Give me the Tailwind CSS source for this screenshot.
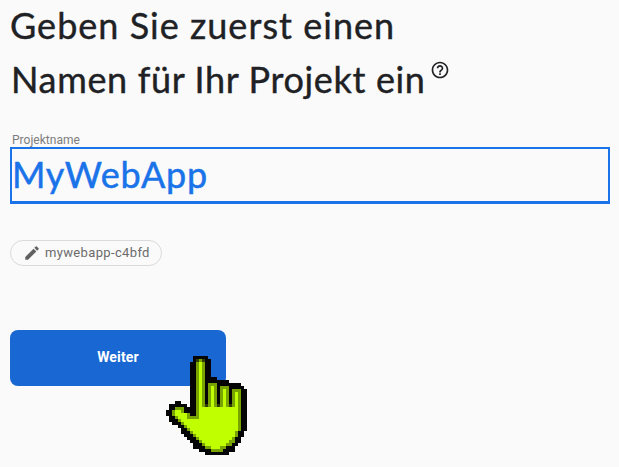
<!DOCTYPE html>
<html lang="de">
<head>
<meta charset="utf-8">
<title>Projekt erstellen</title>
<script src="https://cdn.jsdelivr.net/npm/@tailwindcss/browser@4"></script>
</head>
<body class="relative h-[467px] w-[619px] overflow-hidden bg-[#fafafa] font-[Roboto,sans-serif]">
<main class="flex flex-col items-start px-[10px]">
  <h1 class="h-[107px] whitespace-nowrap font-[Lato,sans-serif] text-[36px] text-[#202124] [-webkit-text-stroke:0.4px_#202124]">
    <span class="block h-[54px] leading-[50px] tracking-[1.02px]">Geben Sie zuerst einen</span>
    <span class="flex h-[54px] items-start leading-[50px]"><span class="w-[420px] pl-px tracking-[0.65px]">Namen für Ihr Projekt ein</span>
      <svg class="mt-[6px] size-5" viewBox="0 0 24 24" fill="#202124"><path d="M11 18h2v-2h-2v2zm1-16C6.48 2 2 6.48 2 12s4.480 10 10 10 10-4.480 10-10S17.520 2 12 2zm0 18c-4.410 0-8-3.590-8-8s3.590-8 8-8 8 3.590 8 8-3.590 8-8 8zm0-14c-2.210 0-4 1.790-4 4h2c0-1.100.9-2 2-2s2 .9 2 2c0 2-3 1.750-3 5h2c0-2.250 3-2.500 3-5 0-2.210-1.790-4-4-4z"/></svg>
    </span>
  </h1>
  <label class="mt-[25px] h-[15px] pl-[2px] text-[12px] leading-4 tracking-[0.03px] text-[#7d7d7d]">Projektname</label>
  <div class="flex h-[57px] w-[600px] border-2 border-b-3 border-[#1a73e8] whitespace-nowrap font-[Lato,sans-serif] text-[36px] leading-[50px] tracking-[0.8px] text-[#1a73e8] [-webkit-text-stroke:0.5px_#1a73e8]">MyWebApp</div>
  <div class="mt-[36px] flex h-[26px] w-[152px] items-center rounded-full border border-[#dadada] pl-[12px] text-[13px] tracking-[0.35px] text-[#6b6b6b]">
    <svg class="mr-[4px] size-[18px] shrink-0" viewBox="0 0 24 24" fill="#616161"><path d="M3 17.250V21h3.750L17.810 9.940l-3.750-3.750L3 17.250zM20.710 7.040a1 1 0 0 0 0-1.410l-2.340-2.340a1 1 0 0 0-1.410 0l-1.830 1.830 3.750 3.750 1.830-1.830z"/></svg>
    <span>mywebapp-c4bfd</span>
  </div>
  <button class="mt-[64px] h-[56px] w-[216px] rounded-lg bg-[#1967d2] pb-[2px] text-[14px] font-bold tracking-[0.15px] text-white">Weiter</button>
</main>
<svg id="pointer" class="absolute left-[166px] top-[356px] h-[99px] w-[81px]" viewBox="0 0 27 33" shape-rendering="crispEdges"></svg>
<script>
// Fingers are drawn cell by cell.
const rows = [
'.........#####',
'.........#dod##',
'........##ogo##',
'........##ogo##',
'........##ogo##',
'........##ogo##',
'........##ogo##',
'........##ogo####',
'........##ogo########',
'........##ogo#ooo########',
'........##ogo#ogo#ooo#####',
'........##ogo#ogo#ogo#ooo##',
'........##ogo#ogo#ogo#ogo##',
'........##ogo#ogo#ogo#ogo##',
'........##ogo#ogo#ogo#ogo##',
'...##...##ogo#ogo#ogo#ogo##',
'.######.##ogodogodogodogo##'];
// Palm rows: left edge, right edge; the space between is filled.
const palm = [
['.##ooo####o','o##'],
['##oggo####o','o##'],
['##oggggo##o','o##'],
['.##ogggoooo','o##'],
['.###ogggggg','o##'],
['..###ogggg','o##'],
['....##oggg','o##'],
['.....##ogg','o##'],
['.....###og','o##.'],
['......###o','o##.'],
['.......###o','o##..'],
['........###o','oo##..'],
['.........###o','oo##...'],
['.........####oo','oo###....'],
['...........####oooo','####....'],
['.............########','......']];
palm.forEach(([l,r])=>rows.push(l + 'g'.repeat(Math.max(0, 27-l.length-r.length)) + r));
const fills = {'#':'#050505', d:'#303f08', o:'#79a300', g:'#bfff00'};
document.getElementById('pointer').innerHTML = rows.map((r,y)=>[...r].map((c,x)=>fills[c] ? `<rect x="${x}" y="${y}" width="1" height="1" fill="${fills[c]}"/>` : '').join('')).join('');
</script>
</body>
</html>
